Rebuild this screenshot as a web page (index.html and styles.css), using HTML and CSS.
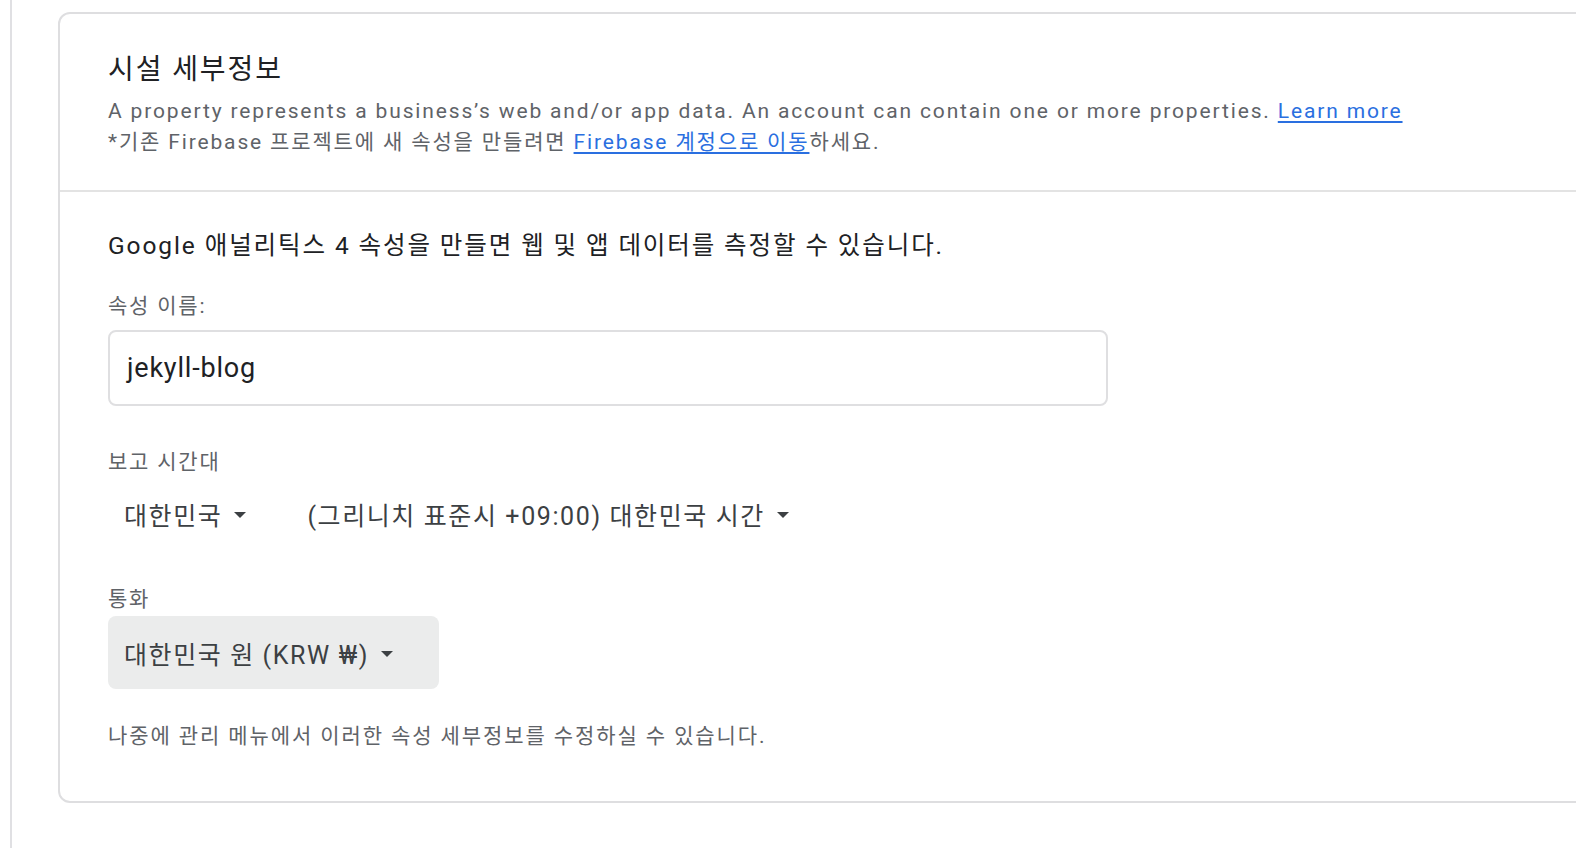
FILE: index.html
```html
<!DOCTYPE html>
<html lang="ko">
<head>
<meta charset="utf-8">
<link rel="stylesheet" href="styles.css">
</head>
<body>
<div class="page">
  <div class="rail">
    <section class="card">
      <header class="card-head">
        <h1 class="title">시설 세부정보</h1>
        <p class="desc">A property represents a business’s web and/or app data. An account can contain one or more properties. <a class="link" href="#">Learn more</a></p>
        <p class="desc">*기존 Firebase 프로젝트에 새 속성을 만들려면 <a class="link" href="#">Firebase 계정으로 이동</a>하세요.</p>
      </header>
      <div class="card-body">
        <p class="intro">Google 애널리틱스 4 속성을 만들면 웹 및 앱 데이터를 측정할 수 있습니다.</p>
        <div class="label">속성 이름:</div>
        <div class="input">jekyll-blog</div>
        <div class="label label-tz">보고 시간대</div>
        <div class="tz-row">
          <div class="select">대한민국<span class="caret"></span></div>
          <div class="select">(그리니치 표준시 +09:00) 대한민국 시간<span class="caret"></span></div>
        </div>
        <div class="label label-cur">통화</div>
        <div class="select filled">대한민국 원 (KRW ₩)<span class="caret"></span></div>
        <p class="note">나중에 관리 메뉴에서 이러한 속성 세부정보를 수정하실 수 있습니다.</p>
      </div>
    </section>
  </div>
</div>
</body>
</html>
```
FILE: styles.css
```css
* { box-sizing: border-box; }
html, body {
  margin: 0;
  padding: 0;
  background: #fff;
}
body {
  font-family: Roboto, "Noto Sans CJK KR", sans-serif;
  color: #202124;
  width: 1576px;
  height: 848px;
  overflow: hidden;
}
.page {
  padding-left: 10px;
  height: 848px;
}
.rail {
  border-left: 2px solid #e0e0e3;
  height: 848px;
  padding: 12px 0 0 46px;
}
.card {
  border: 2px solid #dedee0;
  border-radius: 12px;
  width: 1560px;
  height: 791px;
}
.card-head {
  padding: 38px 48px 32px;
  border-bottom: 2px solid #e3e3e3;
}
.title {
  margin: 0 0 8px;
  font-size: 28px;
  line-height: 36px;
  font-weight: 400;
  letter-spacing: 1.9px;
  color: #202124;
}
.desc {
  margin: 0;
  font-size: 21px;
  line-height: 31px;
  color: #5f6368;
  letter-spacing: 1.85px;
}
.link {
  color: #2a6fe0;
  text-decoration: underline;
  text-underline-offset: 3px;
}
.card-body {
  padding: 36px 48px 0;
}
.intro {
  margin: 0;
  font-size: 24.5px;
  line-height: 36px;
  letter-spacing: 1.9px;
  color: #202124;
}
.label {
  font-size: 21px;
  line-height: 28px;
  letter-spacing: 1.8px;
  color: #5f6368;
  margin-top: 28px;
}
.input {
  margin-top: 10px;
  width: 1000px;
  height: 76px;
  border: 2px solid #dfdfe1;
  border-radius: 8px;
  padding: 0 17px;
  display: flex;
  align-items: center;
  font-size: 27px;
  letter-spacing: 0.8px;
  color: #202124;
}
.label-tz { margin-top: 42px; }
.tz-row {
  display: flex;
  gap: 29px;
  margin-top: 4px;
}
.select {
  display: flex;
  align-items: center;
  height: 68px;
  padding: 0 16px;
  font-size: 25px;
  letter-spacing: 1.6px;
  color: #3c4043;
}
.caret {
  width: 0;
  height: 0;
  border-left: 6px solid transparent;
  border-right: 6px solid transparent;
  border-top: 6px solid #3c4043;
  margin-left: 12px;
  margin-top: 2px;
}
.label-cur { margin-top: 37px; }
.select.filled {
  margin-top: 3px;
  width: 331px;
  height: 73px;
  background: #ebecec;
  border-radius: 8px;
}
.note {
  margin: 33px 0 0;
  font-size: 21px;
  line-height: 28px;
  letter-spacing: 1.9px;
  color: #5f6368;
}
```
